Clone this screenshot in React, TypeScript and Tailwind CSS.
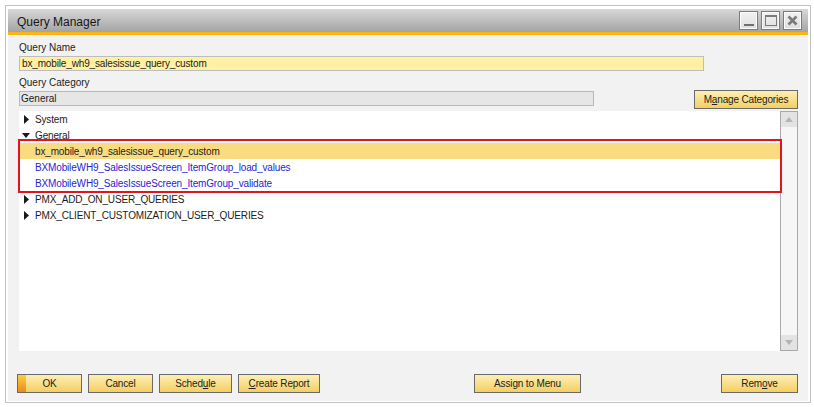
import React from 'react'

const font = "font-['Liberation_Sans',Arial,sans-serif]"

function Btn({
  children,
  className = '',
  primary = false,
}: {
  children: React.ReactNode
  className?: string
  primary?: boolean
}) {
  return (
    <button
      className={`relative h-[19px] border border-[#6a6a6a] bg-gradient-to-b from-[#fcefb4] to-[#f3cf5e] text-[10px] leading-none tracking-[-0.15px] text-[#222] ${className}`}
    >
      {primary && (
        <span className="absolute left-0 top-0 h-full w-[8px] bg-gradient-to-b from-[#f9cf45] to-[#ee8a18]" />
      )}
      <span className="relative">{children}</span>
    </button>
  )
}

function RightArrow() {
  return (
    <svg width="5" height="9" viewBox="0 0 5 9" className="ml-[5px]">
      <polygon points="0,0 5,4.5 0,9" fill="#1a1a1a" />
    </svg>
  )
}

function DownArrow() {
  return (
    <svg width="8" height="5" viewBox="0 0 8 5" className="ml-[3px]">
      <polygon points="0,0 8,0 4,5" fill="#1a1a1a" />
    </svg>
  )
}

type Row = {
  label: string
  arrow?: 'right' | 'down'
  blue?: boolean
  selected?: boolean
}

const rows: Row[] = [
  { label: 'System', arrow: 'right' },
  { label: 'General', arrow: 'down' },
  { label: 'bx_mobile_wh9_salesissue_query_custom', selected: true },
  { label: 'BXMobileWH9_SalesIssueScreen_ItemGroup_load_values', blue: true },
  { label: 'BXMobileWH9_SalesIssueScreen_ItemGroup_validate', blue: true },
  { label: 'PMX_ADD_ON_USER_QUERIES', arrow: 'right' },
  { label: 'PMX_CLIENT_CUSTOMIZATION_USER_QUERIES', arrow: 'right' },
]

function TitleButton({ children }: { children: React.ReactNode }) {
  return (
    <div className="flex h-[19px] w-[19px] items-center justify-center border border-[#7c7c7c] bg-gradient-to-b from-[#f2f2f2] to-[#dedede] shadow-[inset_0_0_0_1px_#fafafa]">
      {children}
    </div>
  )
}

export default function App() {
  return (
    <div className={`h-[407px] w-[814px] bg-white pl-[5px] pt-[5px] ${font}`}>
      <div className="flex h-[398px] w-[806px] flex-col border border-[#c4c4c4] bg-white px-[2px] pb-[1px] pt-[3px]">
        {/* Title bar */}
        <div className="flex h-[23px] items-center bg-gradient-to-b from-[#d8d8d8] to-[#a4a4a4] pl-[9px] pr-[6px]">
          <span className="mt-[2px] text-[12px] text-[#161616]">Query Manager</span>
          <div className="ml-auto flex gap-[3px]">
            <TitleButton>
              <div className="mt-[9px] h-[2px] w-[10px] bg-[#6e6e6e]" />
            </TitleButton>
            <TitleButton>
              <div className="h-[11px] w-[12px] border border-t-2 border-[#7a7a7a]" />
            </TitleButton>
            <TitleButton>
              <svg width="11" height="11" viewBox="0 0 11 11">
                <path d="M1.5 1.5 L9.5 9.5 M9.5 1.5 L1.5 9.5" stroke="#7a7a7a" strokeWidth="2.6" />
              </svg>
            </TitleButton>
          </div>
        </div>
        <div className="h-[3px] bg-[#fbb415]" />

        {/* Body */}
        <div className="flex flex-1 flex-col bg-[#f2f2f2]">
          <div className="flex flex-col pl-[11px] pr-[10px] pt-[6px]">
            <div className="h-[14px] text-[10px] leading-[14px] text-[#1c1c1c]">Query Name</div>
            <div className="mt-[1px] flex h-[15px] w-[685px] items-center border border-[#bdbdbd] bg-[#fff0a3] pl-[2px] text-[10px] tracking-[-0.15px] text-[#1c1c1c]">
              bx_mobile_wh9_salesissue_query_custom
            </div>
            <div className="mt-[5px] h-[14px] text-[10px] leading-[14px] text-[#1c1c1c]">Query Category</div>
            <div className="flex items-start justify-between">
              <div className="mt-[1px] flex h-[15px] w-[575px] items-center border border-[#b8b8b8] bg-[#e6e6e6] pl-[1px] text-[10px] text-[#1c1c1c]">
                General
              </div>
              <Btn className="h-[18px] w-[104px]">
                M<u className="underline-offset-1">a</u>nage Categories
              </Btn>
            </div>

            {/* Tree */}
            <div className="mt-[2px] flex h-[240px] bg-white">
              <div className="relative flex flex-1 flex-col">
                {rows.map((r) => (
                  <div
                    key={r.label}
                    className={`flex h-[16px] items-center ${r.selected ? 'bg-[#fadc80]' : ''}`}
                  >
                    <div className="flex w-[16px] items-center">
                      {r.arrow === 'right' && <RightArrow />}
                      {r.arrow === 'down' && <DownArrow />}
                    </div>
                    <span
                      className={`text-[10px] tracking-[-0.15px] ${r.blue ? 'text-[#2626d8]' : 'text-[#1c1c1c]'}`}
                    >
                      {r.label}
                    </span>
                  </div>
                ))}
                <div className="pointer-events-none absolute left-[-1px] top-[28px] h-[54px] w-[764px] border-2 border-[#e3141c]" />
              </div>
              <div className="flex w-[18px] flex-col justify-between border border-[#a9a9a9] bg-[#f6f6f6]">
                <div className="flex h-[15px] w-full items-center justify-center bg-[#e3e3e3]">
                  <svg width="8" height="5" viewBox="0 0 8 5">
                    <polygon points="0,5 8,5 4,0" fill="#b4b4b4" />
                  </svg>
                </div>
                <div className="flex h-[15px] w-full items-center justify-center bg-[#e3e3e3]">
                  <svg width="8" height="5" viewBox="0 0 8 5">
                    <polygon points="0,0 8,0 4,5" fill="#b4b4b4" />
                  </svg>
                </div>
              </div>
            </div>
          </div>

          {/* Bottom buttons */}
          <div className="mt-[23px] flex pl-[9px] pr-[10px]">
            <div className="flex gap-[6px]">
              <Btn primary className="w-[65px]">OK</Btn>
              <Btn className="w-[65px]">Cancel</Btn>
              <Btn className="w-[73px]">
                Sched<u className="underline-offset-1">u</u>le
              </Btn>
              <Btn className="w-[82px]">
                <u className="underline-offset-1">C</u>reate Report
              </Btn>
            </div>
            <Btn className="ml-[154px] w-[107px]">
              Assi<u className="underline-offset-1">g</u>n to Menu
            </Btn>
            <Btn className="ml-auto w-[77px]">
              Rem<u className="underline-offset-1">o</u>ve
            </Btn>
          </div>
        </div>
      </div>
    </div>
  )
}
